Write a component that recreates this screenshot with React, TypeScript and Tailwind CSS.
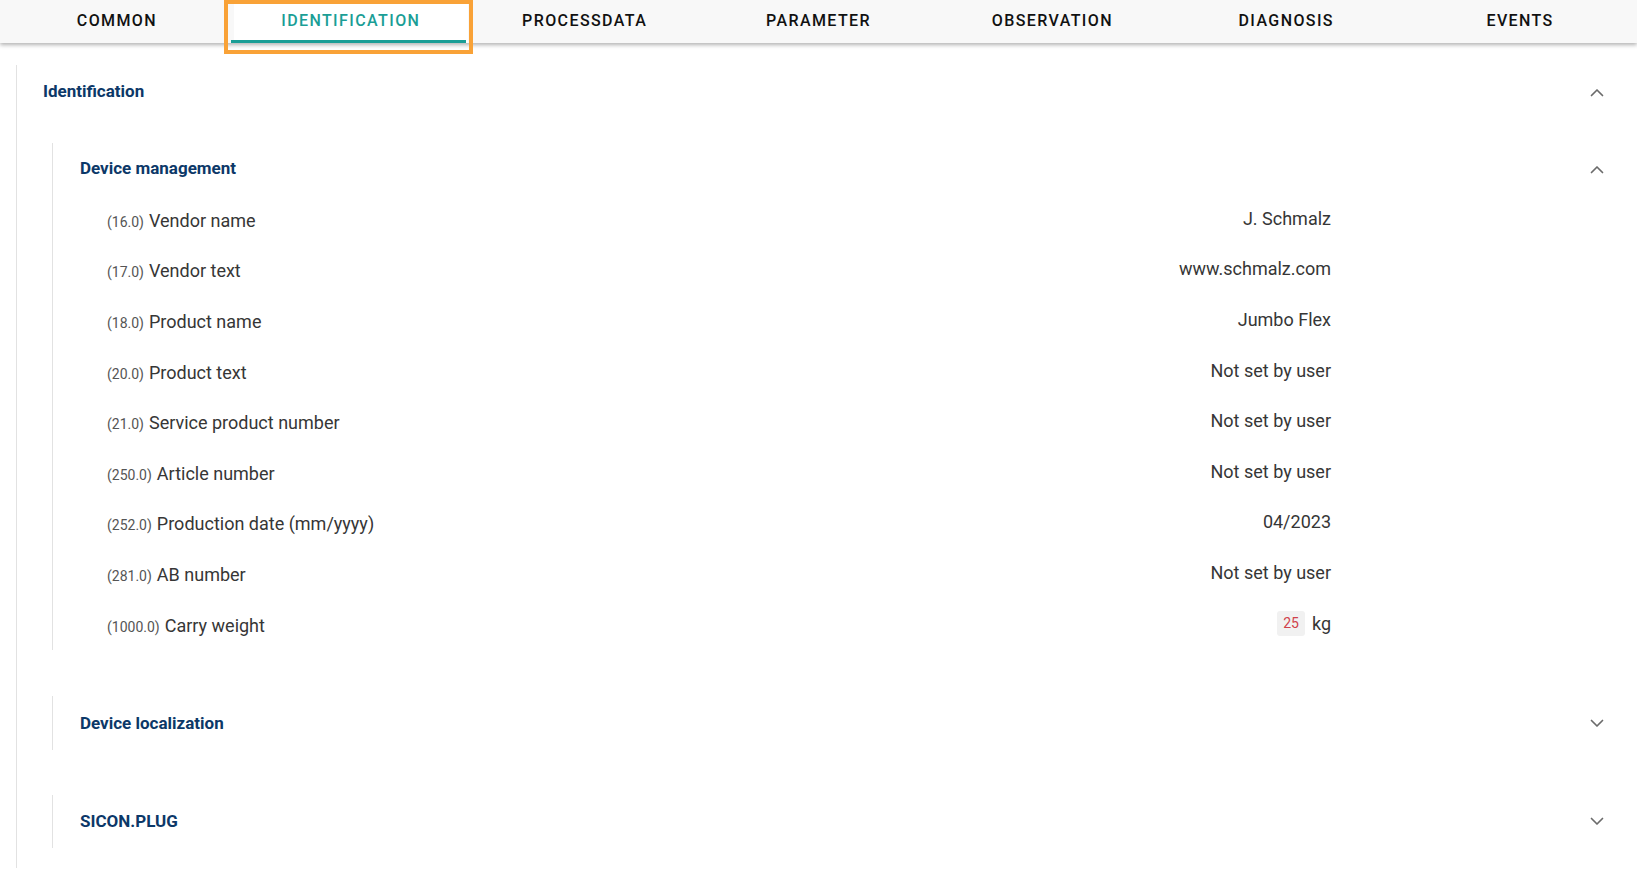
import React from 'react';

type Row = { id: string; label: string; value: React.ReactNode };

const tabs = ['COMMON', 'IDENTIFICATION', 'PROCESSDATA', 'PARAMETER', 'OBSERVATION', 'DIAGNOSIS', 'EVENTS'];

const rows: Row[] = [
  { id: '16.0', label: 'Vendor name', value: 'J. Schmalz' },
  { id: '17.0', label: 'Vendor text', value: 'www.schmalz.com' },
  { id: '18.0', label: 'Product name', value: 'Jumbo Flex' },
  { id: '20.0', label: 'Product text', value: 'Not set by user' },
  { id: '21.0', label: 'Service product number', value: 'Not set by user' },
  { id: '250.0', label: 'Article number', value: 'Not set by user' },
  { id: '252.0', label: 'Production date (mm/yyyy)', value: '04/2023' },
  { id: '281.0', label: 'AB number', value: 'Not set by user' },
  {
    id: '1000.0',
    label: 'Carry weight',
    value: (
      <span className="flex items-center gap-[7px]">
        <code className="rounded-[3px] bg-[#f1f1f1] px-[6px] py-[3px] text-[14px] leading-[19px] text-[#d0414b] font-['Roboto',sans-serif]">25</code>
        <span>kg</span>
      </span>
    ),
  },
];

function Chevron({ up }: { up: boolean }) {
  return (
    <svg width="14" height="9" viewBox="0 0 14 9" fill="none" stroke="#6b6b6b" strokeWidth="1.7" strokeLinecap="round" strokeLinejoin="round">
      {up ? <polyline points="1.5,7.5 7,2 12.5,7.5" /> : <polyline points="1.5,1.5 7,7 12.5,1.5" />}
    </svg>
  );
}

function SectionHeader({ title, open, className }: { title: string; open: boolean; className: string }) {
  return (
    <div className={`flex items-center justify-between ${className}`}>
      <span className="text-[17px] font-bold text-[#0c3868]">{title}</span>
      <Chevron up={open} />
    </div>
  );
}

export default function App() {
  return (
    <div className="relative min-h-[869px] w-full bg-white font-['Roboto',sans-serif]">
      {/* tab strip */}
      <div className="relative z-10 flex h-[43px] bg-[#f8f8f8] shadow-[0_2px_4px_rgba(0,0,0,0.3)]">
        {tabs.map((t) => {
          const active = t === 'IDENTIFICATION';
          return (
            <div key={t} className={`relative flex flex-1 items-center justify-center pb-[1px] ${active ? 'bg-white' : ''}`}>
              <span className={`text-[16px] font-medium tracking-[1.4px] ${active ? 'text-[#1b9e96]' : 'text-[#111111]'}`}>{t}</span>
              {active && <div className="absolute bottom-0 left-[-3px] right-[2px] h-[3px] bg-[#1b9e96]" />}
            </div>
          );
        })}
      </div>
      {/* focus frame round the active tab */}
      <div className="pointer-events-none absolute left-[224px] top-0 z-20 h-[54px] w-[249px] border-[4px] border-[#f9a237]" />

      <div className="pl-[16px] pr-[33px] pt-[22px]">
        <div className="border-l border-[#e2e2e2] pb-[20px]">
          <SectionHeader title="Identification" open className="h-[54px] pl-[26px]" />

          <div className="ml-[35px] mt-[24px] border-l border-[#e2e2e2]">
            <SectionHeader title="Device management" open className="h-[52px] pl-[27px]" />
            <div>
              {rows.map((r) => (
                <div key={r.id} className="flex h-[50.6px] items-center pl-[54px] pr-[273px] text-[18px] text-[#363636]">
                  <div className="flex-1">
                    <span className="mr-[5px] text-[14px] text-[#555555]">({r.id})</span>
                    <span>{r.label}</span>
                  </div>
                  <div className="pb-[4px] text-right">{r.value}</div>
                </div>
              ))}
            </div>
          </div>

          <div className="ml-[35px] mt-[46px] border-l border-[#e2e2e2]">
            <SectionHeader title="Device localization" open={false} className="h-[54px] pl-[27px]" />
          </div>

          <div className="ml-[35px] mt-[45px] border-l border-[#e2e2e2]">
            <SectionHeader title="SICON.PLUG" open={false} className="h-[53px] pl-[27px]" />
          </div>
        </div>
      </div>
    </div>
  );
}
